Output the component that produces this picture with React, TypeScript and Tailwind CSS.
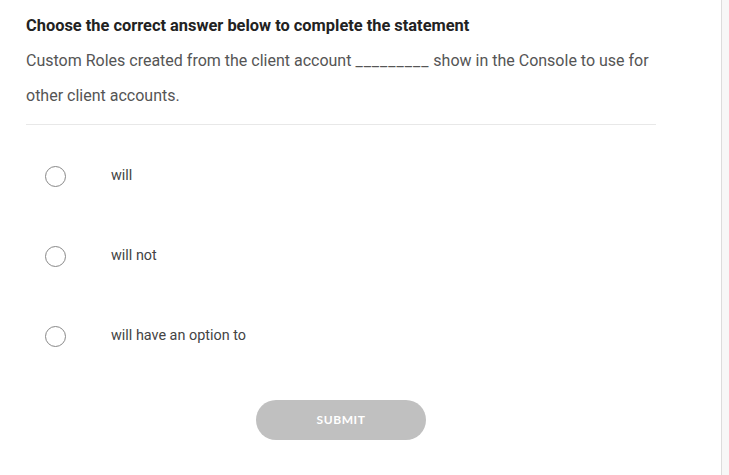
import { useState } from 'react'

// ---------------------------------------------------------------------------
// Question data
// ---------------------------------------------------------------------------

const OPTIONS = ['will', 'will not', 'will have an option to']

// ---------------------------------------------------------------------------
// App
// ---------------------------------------------------------------------------

export default function App() {
  const [selected, setSelected] = useState<number | null>(null)

  return (
    <div className="flex h-[475px] w-full overflow-hidden bg-white font-['Roboto',sans-serif]">
      {/* Question card */}
      <div className="flex-1 pl-[26px] pr-[65px] pt-[15px]">
        <h2 className="text-[16.4px] font-bold leading-[22px] text-[#222]">
          Choose the correct answer below to complete the statement
        </h2>
        <p className="mt-[6px] mr-[-12px] text-[16px] leading-[35px] text-[#555]">
          Custom Roles created from the client account{' '}
          <span className="tracking-[1px]">_________</span> show in the Console to use for other
          client accounts.
        </p>

        <div className="mt-[11px] border-t border-[#e8e8e8]" />

        <ul className="mt-[41px] flex flex-col gap-[60px]">
          {OPTIONS.map((label, i) => (
            <li
              key={label}
              className="flex h-[20px] cursor-pointer items-center"
              onClick={() => setSelected(i)}
            >
              <span className="ml-[19px] flex h-[21px] w-[21px] items-center justify-center rounded-full border border-[#888] bg-white">
                {selected === i && <span className="h-[11px] w-[11px] rounded-full bg-[#555]" />}
              </span>
              <span className="ml-[45px] text-[14.4px] text-[#444]">{label}</span>
            </li>
          ))}
        </ul>

        <div className="mt-[54px] flex justify-center">
          <button
            type="button"
            className="h-[40px] w-[170px] rounded-full bg-[#c0c0c0] font-['Lato',sans-serif] text-[12px] font-bold tracking-[0.6px] text-white"
          >
            SUBMIT
          </button>
        </div>
      </div>

      {/* Scrollbar track */}
      <div className="w-[8px] shrink-0 border-l border-[#dcdcdc] bg-[#f7f7f7]" />
    </div>
  )
}
